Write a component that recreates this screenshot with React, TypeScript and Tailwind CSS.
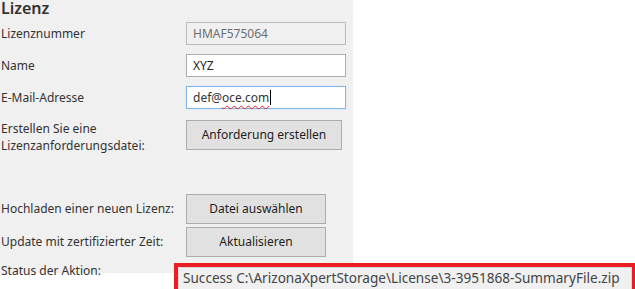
const inputBase =
  "w-[160px] h-[23px] border px-[6px] flex items-center text-[12px] leading-none";
const buttonBase =
  "h-[30px] bg-[#e1e1e1] border border-[#adadad] text-[12px] text-[#1e1e1e] flex items-center justify-center";

const App = () => {
  return (
    <div className="w-[635px] h-[289px] bg-white overflow-hidden font-['Segoe_UI','Noto_Sans',sans-serif] text-[12px] text-[#333333]">
      <div className="w-[353px] h-[273px] bg-[#f0f0f0] pl-[1px]">
        <h2 className="h-[22px] pt-[1px] text-[16px] leading-[14px] font-semibold text-[#333333]">
          Lizenz
        </h2>

        <div className="flex items-center h-[23px]">
          <label className="w-[185px]">Lizenznummer</label>
          <div className={`${inputBase} bg-[#f0f0f0] border-[#bcbcbc] text-[#6d6d6d]`}>
            HMAF575064
          </div>
        </div>

        <div className="flex items-center h-[23px] mt-[9px]">
          <label className="w-[185px]">Name</label>
          <div className={`${inputBase} bg-white border-[#abadb3] text-[#222222]`}>
            XYZ
          </div>
        </div>

        <div className="flex items-center h-[23px] mt-[9px]">
          <label className="w-[185px]">E-Mail-Adresse</label>
          <div
            className={`${inputBase} bg-white border-[#7eb4ea] text-[#333333] shadow-[0_0_2px_#cfe3f7]`}
          >
            def@
            <span className="underline decoration-wavy decoration-[#e02020] decoration-1 underline-offset-[3px]">
              oce.com
            </span>
            <span className="inline-block w-[1px] h-[15px] bg-black ml-[1px]" />
          </div>
        </div>

        <div className="flex items-start mt-[11px]">
          <label className="w-[185px] leading-[17px]">
            Erstellen Sie eine
            <br />
            Lizenzanforderungsdatei:
          </label>
          <button className={`${buttonBase} w-[156px]`}>Anforderung erstellen</button>
        </div>

        <div className="flex items-center mt-[40px]">
          <label className="w-[185px]">Hochladen einer neuen Lizenz:</label>
          <button className={`${buttonBase} w-[140px] h-[29px]`}>Datei auswählen</button>
        </div>

        <div className="flex items-center mt-[3px]">
          <label className="w-[185px]">Update mit zertifizierter Zeit:</label>
          <button className={`${buttonBase} w-[140px]`}>Aktualisieren</button>
        </div>

        <div className="flex items-start mt-[6px]">
          <label className="shrink-0 w-[173px] leading-[16px] whitespace-nowrap">
            Status der Aktion:
          </label>
          <div className="shrink-0 w-[462px] h-[31px] border-[4px] border-[#ec1c24] bg-white">
            <div className="h-full bg-[#f0f0f0] border border-[#d9d9d9] px-[4px] flex items-center text-[13.6px] text-[#444444] whitespace-nowrap">
              Success C:\ArizonaXpertStorage\License\3-3951868-SummaryFile.zip
            </div>
          </div>
        </div>
      </div>
    </div>
  );
};

export default App;
